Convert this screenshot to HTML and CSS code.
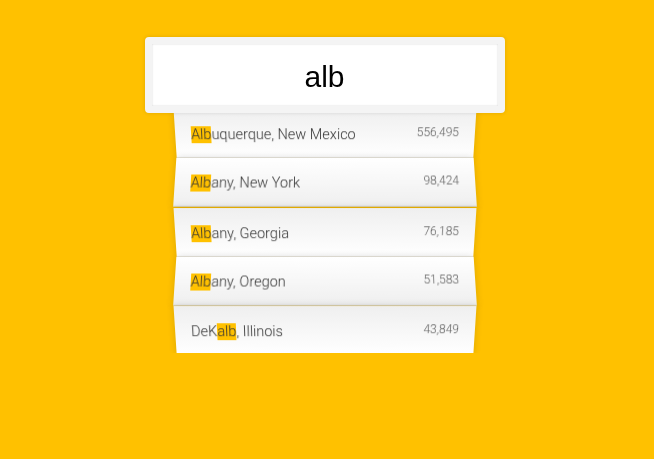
FILE: index.html
```html
<!DOCTYPE html>
<html lang="en">
<head>
<meta charset="utf-8">
<title>Type Ahead</title>
<link rel="stylesheet" href="styles.css">
</head>
<body>
<form class="search-form">
  <input type="text" class="search" value="alb" placeholder="City or State">
  <ul class="suggestions">
    <li><span class="name"><span class="hl">Alb</span>uquerque, New Mexico</span><span class="population">556,495</span></li>
    <li><span class="name"><span class="hl">Alb</span>any, New York</span><span class="population">98,424</span></li>
    <li><span class="name"><span class="hl">Alb</span>any, Georgia</span><span class="population">76,185</span></li>
    <li><span class="name"><span class="hl">Alb</span>any, Oregon</span><span class="population">51,583</span></li>
    <li><span class="name">DeK<span class="hl">alb</span>, Illinois</span><span class="population">43,849</span></li>
  </ul>
</form>
</body>
</html>
```

FILE: styles.css
```css
html {
  box-sizing: border-box;
  background: #ffc100;
  font-family: Roboto, "Liberation Sans", sans-serif;
  font-size: 14.5px;
  font-weight: 300;
}
*, *::before, *::after { box-sizing: inherit; }
body { margin: 0; }

.search-form {
  width: 300px;
  margin: 30px 0 0 calc(50% - 152.5px);
}

.search {
  display: block;
  position: relative;
  z-index: 2;
  top: 7px;
  left: -30px;
  width: 360px;
  height: 76px;
  margin: 0 0 1px;
  padding: 3px 15px 0;
  text-align: center;
  outline: 0;
  border: 7.5px solid #f4f4f4;
  border-radius: 4px;
  background: #fff;
  color: #000;
  font-family: "Liberation Sans", Arial, sans-serif;
  font-size: 30px;
  font-weight: 400;
  box-shadow: 0 0 4px rgba(0,0,0,0.12), inset 0 0 2px rgba(0,0,0,0.19);
}

.suggestions {
  margin: 0;
  padding: 0;
  position: relative;
  list-style: none;
}

.suggestions li {
  background: #fff;
  border-bottom: 1px solid #d8d8d8;
  box-shadow: 0 0 7.5px rgba(0,0,0,0.14);
  margin: 0;
  padding: 17px 16px 13px 16px;
  line-height: 18.3px;
  display: flex;
  justify-content: space-between;
  align-items: flex-start;
  color: #333;
}

.suggestions li:nth-child(even) {
  transform: perspective(100px) rotateX(2.5deg) translateY(1.5px) scale(1.001);
  background: linear-gradient(to bottom, #ffffff 0%, #efefef 100%);
}

.suggestions li:nth-child(odd) {
  transform: perspective(100px) rotateX(-2.5deg) translateY(2.25px);
  background: linear-gradient(to top, #ffffff 0%, #efefef 100%);
}

.population {
  font-size: 12px;
  line-height: 12px;
  color: #5a5a5a;
}

.hl {
  background: #ffc100;
}
```
